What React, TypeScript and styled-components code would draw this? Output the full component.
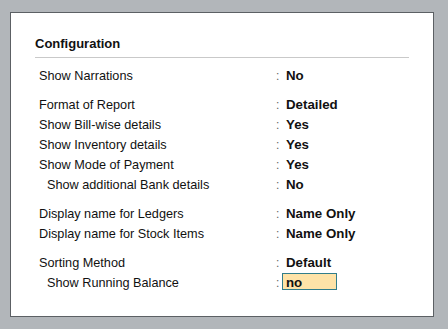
import styled, { createGlobalStyle } from "styled-components";

type Field = {
  label: string;
  value: string;
  indent?: boolean;
  editing?: boolean;
};

const groups: Field[][] = [
  [{ label: "Show Narrations", value: "No" }],
  [
    { label: "Format of Report", value: "Detailed" },
    { label: "Show Bill-wise details", value: "Yes" },
    { label: "Show Inventory details", value: "Yes" },
    { label: "Show Mode of Payment", value: "Yes" },
    { label: "Show additional Bank details", value: "No", indent: true },
  ],
  [
    { label: "Display name for Ledgers", value: "Name Only" },
    { label: "Display name for Stock Items", value: "Name Only" },
  ],
  [
    { label: "Sorting Method", value: "Default" },
    { label: "Show Running Balance", value: "no", indent: true, editing: true },
  ],
];

const App = () => {
  return (
    <>
      <GlobalStyle />
      <Page>
        <Panel>
          <Title>Configuration</Title>
          <Fields>
            {groups.map((group, i) => (
              <Group key={i}>
                {group.map((f) => (
                  <Row key={f.label}>
                    <Label $indent={f.indent}>{f.label}</Label>
                    <Colon>:</Colon>
                    {f.editing ? (
                      <EditBox>{f.value}</EditBox>
                    ) : (
                      <Value>{f.value}</Value>
                    )}
                  </Row>
                ))}
              </Group>
            ))}
          </Fields>
        </Panel>
      </Page>
    </>
  );
};

export default App;

const GlobalStyle = createGlobalStyle`
  html, body {
    margin: 0;
    padding: 0;
    background: #b2b6ba;
  }
  body {
    font-family: "Liberation Sans", Arial, sans-serif;
    font-size: 12px;
    color: #000;
  }
`;

const Page = styled.div`
  width: 448px;
  height: 329px;
  padding: 12px 0 0 10px;
  box-sizing: border-box;
`;

const Panel = styled.div`
  width: 424px;
  height: 305px;
  box-sizing: border-box;
  background: #ffffff;
  border: 1px solid #5c6064;
  padding: 23px 0 0 24px;
`;

const Title = styled.div`
  width: 374px;
  font-size: 13px;
  font-weight: 700;
  line-height: 16px;
  color: #111;
  padding-bottom: 5px;
  border-bottom: 1px solid #c9c9c9;
`;

const Fields = styled.div`
  display: flex;
  flex-direction: column;
  gap: 9px;
  padding: 8px 0 0 4px;
`;

const Group = styled.div`
  display: flex;
  flex-direction: column;
`;

const Row = styled.div`
  display: flex;
  align-items: baseline;
  height: 20px;
  line-height: 20px;
`;

const Label = styled.div<{ $indent?: boolean }>`
  width: 237px;
  padding-left: ${(p) => (p.$indent ? "8px" : "0")};
  box-sizing: border-box;
  font-size: 12.7px;
  color: #111;
`;

const Colon = styled.div`
  width: 6px;
  color: #666;
`;

const Value = styled.div`
  padding-left: 4px;
  font-size: 13.3px;
  font-weight: 700;
  color: #111;
`;

const EditBox = styled.div`
  width: 55px;
  height: 17px;
  box-sizing: border-box;
  border: 1px solid #317d8b;
  background: #fee3a8;
  padding: 1px 0 0 3px;
  line-height: 15px;
  font-size: 13.3px;
  font-weight: 700;
  color: #111;
`;
